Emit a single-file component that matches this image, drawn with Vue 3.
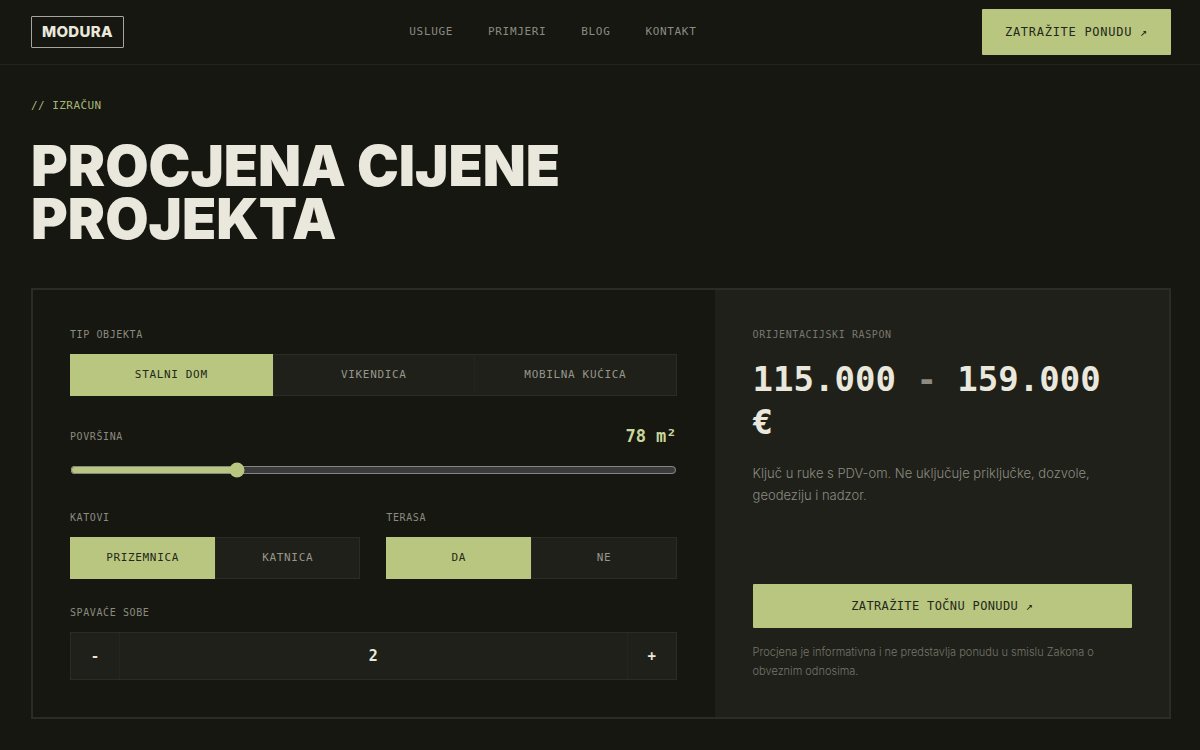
<script setup>
import { ref } from 'vue'

const links = ['Usluge', 'Primjeri', 'Blog', 'Kontakt']
const types = ['Stalni dom', 'Vikendica', 'Mobilna kućica']
const floors = ['Prizemnica', 'Katnica']
const terraceOptions = ['Da', 'Ne']

const type = ref(types[0])
const floor = ref(floors[0])
const terrace = ref(terraceOptions[0])
const area = ref(78)
const rooms = ref(2)
</script>

<template>
  <div class="page">
    <header class="topbar">
      <a class="logo" href="#">MODURA</a>
      <nav class="nav">
        <a v-for="l in links" :key="l" href="#">{{ l }}</a>
      </nav>
      <a class="cta cta-top" href="#">Zatražite ponudu ↗</a>
    </header>

    <main class="main">
      <p class="eyebrow">// Izračun</p>
      <h1>Procjena cijene projekta</h1>

      <section class="card">
        <form class="form" @submit.prevent>
          <div role="group" aria-labelledby="l-type">
            <span id="l-type" class="label">Tip objekta</span>
            <div class="seg">
              <button v-for="t in types" :key="t" type="button" :class="{ on: t === type }" :aria-pressed="t === type" @click="type = t">{{ t }}</button>
            </div>
          </div>

          <div class="area">
            <div class="area-head">
              <label class="label" for="area">Površina</label>
              <output for="area">{{ area }} m²</output>
            </div>
            <input id="area" v-model="area" type="range" min="24" max="224" />
          </div>

          <div class="pair">
            <div role="group" aria-labelledby="l-floor">
              <span id="l-floor" class="label">Katovi</span>
              <div class="seg">
                <button v-for="f in floors" :key="f" type="button" :class="{ on: f === floor }" :aria-pressed="f === floor" @click="floor = f">{{ f }}</button>
              </div>
            </div>
            <div role="group" aria-labelledby="l-terrace">
              <span id="l-terrace" class="label">Terasa</span>
              <div class="seg">
                <button v-for="o in terraceOptions" :key="o" type="button" :class="{ on: o === terrace }" :aria-pressed="o === terrace" @click="terrace = o">{{ o }}</button>
              </div>
            </div>
          </div>

          <div class="rooms" role="group" aria-labelledby="l-rooms">
            <span id="l-rooms" class="label">Spavaće sobe</span>
            <div class="stepper">
              <button type="button" @click="rooms = Math.max(1, rooms - 1)">-</button>
              <output>{{ rooms }}</output>
              <button type="button" @click="rooms++">+</button>
            </div>
          </div>
        </form>

        <aside class="result">
          <span class="label dim">Orijentacijski raspon</span>
          <p class="price">
            <span>115.000</span> <span class="dash">-</span> <span>159.000</span> <span>€</span>
          </p>
          <p class="info">Ključ u ruke s PDV-om. Ne uključuje priključke, dozvole, geodeziju i nadzor.</p>
          <a class="cta cta-wide" href="#">Zatražite točnu ponudu ↗</a>
          <p class="note">Procjena je informativna i ne predstavlja ponudu u smislu Zakona o obveznim odnosima.</p>
        </aside>
      </section>
    </main>
  </div>
</template>

<style>
body {
  background: #161710;
}
</style>

<style scoped>
.page {
  --bg: #161710;
  --panel: #1f2019;
  --line: #2b2c26;
  --green: #b8c67f;
  --cream: #eae8dd;
  --muted: #8b8b81;
  --mono: "DejaVu Sans Mono", monospace;
  --sans: Inter, "Liberation Sans", sans-serif;
  color-scheme: dark;
  background: var(--bg);
  color: var(--cream);
  font-family: var(--sans);
}

a {
  color: inherit;
  text-decoration: none;
}

p,
h1 {
  margin: 0;
}

.topbar {
  display: flex;
  align-items: center;
  justify-content: space-between;
  height: 64px;
  padding: 0 29px 0 31px;
  border-bottom: 1px solid #22231d;
}

.logo {
  padding: 0 10px;
  border: 1px solid #a5a59c;
  border-radius: 1px;
  font-size: 15px;
  font-weight: 800;
  line-height: 30px;
  letter-spacing: 0.02em;
}

.nav {
  display: flex;
  gap: 35px;
  color: var(--muted);
  font: 11px/16px var(--mono);
  letter-spacing: 0.06em;
  text-transform: uppercase;
}

.cta {
  border-radius: 1px;
  background: var(--green);
  color: #24281a;
  font-family: var(--mono);
  font-size: 12px;
  text-align: center;
  text-transform: uppercase;
}

.cta-top {
  padding: 0 23px;
  line-height: 46px;
  letter-spacing: 0.06em;
}

.cta-wide {
  margin-top: auto;
  line-height: 44px;
  letter-spacing: 0.03em;
}

.main {
  padding: 33px 29px 31px 31px;
}

.eyebrow {
  color: #a9b578;
  font: 11px/16px var(--mono);
  letter-spacing: 0.04em;
  text-transform: uppercase;
}

h1 {
  max-width: 640px;
  margin: 26px 0 42px;
  font-size: 56px;
  font-weight: 900;
  line-height: 53px;
  text-transform: uppercase;
}

.card {
  display: grid;
  grid-template-columns: 3fr 2fr;
  border: 2px solid var(--line);
}

.form {
  padding: 37px 38px 37px 37px;
}

.label {
  display: block;
  color: var(--muted);
  font: 10px/15px var(--mono);
  letter-spacing: 0.06em;
  text-transform: uppercase;
}

.dim {
  color: #77786e;
}

.seg {
  display: grid;
  grid-auto-flow: column;
  grid-auto-columns: 1fr;
  height: 42px;
  box-sizing: border-box;
  margin-top: 12px;
  border: 1px solid var(--line);
  background: var(--panel);
}

.seg button {
  margin: -1px 0;
  padding: 0;
  border: 0;
  border-block: 1px solid transparent;
  background: none;
  color: #96968b;
  font: 11px/16px var(--mono);
  letter-spacing: 0.06em;
  text-transform: uppercase;
}

.seg button + button {
  border-left: 1px solid #24251f;
}

.seg button.on {
  margin-left: -1px;
  border-color: var(--green);
  background: var(--green);
  color: #24281a;
}

.area {
  margin-top: 28px;
}

.area-head {
  display: flex;
  align-items: center;
  justify-content: space-between;
  height: 24px;
}

.area-head output {
  color: #cbd69a;
  font: bold 17px/24px var(--mono);
}

.area input {
  display: block;
  width: 100%;
  height: 16px;
  margin: 14px 0 0;
  accent-color: var(--green);
}

.pair {
  display: grid;
  grid-template-columns: 1fr 1fr;
  gap: 26px;
  margin-top: 32px;
}

.rooms {
  margin-top: 26px;
}

.stepper {
  display: grid;
  grid-template-columns: 48px 1fr 48px;
  height: 48px;
  box-sizing: border-box;
  margin-top: 12px;
  border: 1px solid var(--line);
  background: var(--panel);
  text-align: center;
}

.stepper button {
  padding: 0;
  border: 0;
  background: none;
  color: var(--cream);
  font: bold 14px/16px var(--mono);
}

.stepper output {
  border: solid #24251f;
  border-width: 0 1px;
  font: bold 15px/46px var(--mono);
}

.result {
  display: flex;
  flex-direction: column;
  padding: 37px 37px 36px 38px;
  background: var(--panel);
}

.price {
  margin: 16px 0 18px;
  font: bold 34px/43px var(--mono);
}

.dash {
  color: var(--muted);
}

.info {
  max-width: 360px;
  color: var(--muted);
  font-size: 13px;
  font-weight: 300;
  line-height: 22px;
}

.note {
  margin-top: 15px;
  color: #74756b;
  font-size: 11px;
  font-weight: 300;
  line-height: 19px;
}
</style>
